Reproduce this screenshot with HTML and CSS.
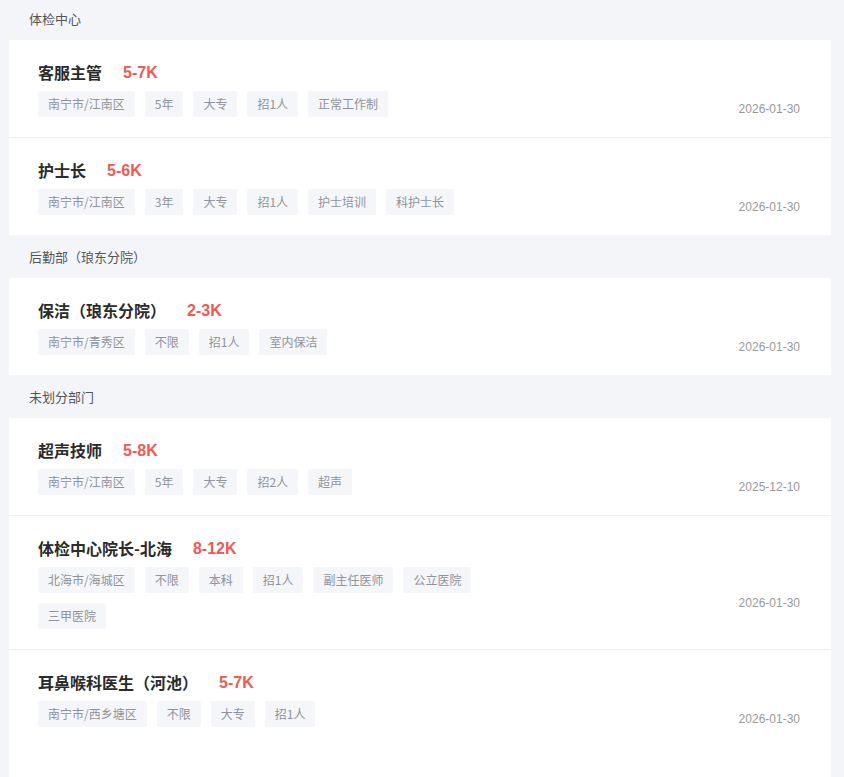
FILE: index.html
```html
<!DOCTYPE html>
<html lang="zh-CN">
<head>
<meta charset="utf-8">
<title>职位列表</title>
<link rel="stylesheet" href="styles.css">
</head>
<body>
<div class="page">
  <div class="section-title first">体检中心</div>
  <div class="card">
    <div class="job">
      <div class="job-main">
        <div class="job-head"><span class="job-name">客服主管</span><span class="salary">5-7K</span></div>
        <div class="tags"><span class="tag">南宁市/江南区</span><span class="tag">5年</span><span class="tag">大专</span><span class="tag">招1人</span><span class="tag">正常工作制</span></div>
      </div>
      <div class="job-side"><span class="date">2026-01-30</span></div>
    </div>
    <div class="job">
      <div class="job-main">
        <div class="job-head"><span class="job-name">护士长</span><span class="salary">5-6K</span></div>
        <div class="tags"><span class="tag">南宁市/江南区</span><span class="tag">3年</span><span class="tag">大专</span><span class="tag">招1人</span><span class="tag">护士培训</span><span class="tag">科护士长</span></div>
      </div>
      <div class="job-side"><span class="date">2026-01-30</span></div>
    </div>
  </div>

  <div class="section-title">后勤部（琅东分院）</div>
  <div class="card">
    <div class="job">
      <div class="job-main">
        <div class="job-head"><span class="job-name">保洁（琅东分院）</span><span class="salary">2-3K</span></div>
        <div class="tags"><span class="tag">南宁市/青秀区</span><span class="tag">不限</span><span class="tag">招1人</span><span class="tag">室内保洁</span></div>
      </div>
      <div class="job-side"><span class="date">2026-01-30</span></div>
    </div>
  </div>

  <div class="section-title">未划分部门</div>
  <div class="card last">
    <div class="job">
      <div class="job-main">
        <div class="job-head"><span class="job-name">超声技师</span><span class="salary">5-8K</span></div>
        <div class="tags"><span class="tag">南宁市/江南区</span><span class="tag">5年</span><span class="tag">大专</span><span class="tag">招2人</span><span class="tag">超声</span></div>
      </div>
      <div class="job-side"><span class="date">2025-12-10</span></div>
    </div>
    <div class="job">
      <div class="job-main">
        <div class="job-head"><span class="job-name">体检中心院长-北海</span><span class="salary">8-12K</span></div>
        <div class="tags"><span class="tag">北海市/海城区</span><span class="tag">不限</span><span class="tag">本科</span><span class="tag">招1人</span><span class="tag">副主任医师</span><span class="tag">公立医院</span><span class="tag">三甲医院</span></div>
      </div>
      <div class="job-side"><span class="date">2026-01-30</span></div>
    </div>
    <div class="job">
      <div class="job-main">
        <div class="job-head"><span class="job-name">耳鼻喉科医生（河池）</span><span class="salary">5-7K</span></div>
        <div class="tags"><span class="tag">南宁市/西乡塘区</span><span class="tag">不限</span><span class="tag">大专</span><span class="tag">招1人</span></div>
      </div>
      <div class="job-side"><span class="date">2026-01-30</span></div>
    </div>
  </div>
</div>
</body>
</html>
```
FILE: styles.css
```css
* { box-sizing: border-box; }
html, body {
  margin: 0;
  padding: 0;
  background: #f4f5f9;
  font-family: "Noto Sans CJK SC", "Liberation Sans", sans-serif;
}
.page {
  padding: 0 13px 0 9px;
  overflow: hidden;
  height: 777px;
}
.section-title {
  height: 43px;
  line-height: 43px;
  padding-left: 20px;
  font-size: 13px;
  color: #555;
}
.section-title.first {
  height: 40px;
  line-height: 37px;
}
.card {
  background: #fff;
}
.card.last {
  padding-bottom: 80px;
}
.job {
  display: flex;
  align-items: center;
  padding: 20px 31px 20px 29px;
  border-bottom: 1px solid #f0f1f4;
}
.job:last-child { border-bottom: none; }
.job-main {
  flex: 1;
  min-width: 0;
}
.job-head {
  display: flex;
  align-items: center;
  height: 24px;
  margin-bottom: 7px;
}
.job-name {
  font-size: 16px;
  font-weight: 700;
  color: #2b2b2b;
}
.salary {
  margin-left: 21px;
  padding-top: 1px;
  font-family: "Liberation Sans", Arial, sans-serif;
  font-size: 16px;
  font-weight: 700;
  color: #ee5a55;
}
.tags {
  display: flex;
  flex-wrap: wrap;
  gap: 10px 10px;
  max-width: 470px;
}
.tag {
  height: 26px;
  line-height: 26px;
  padding: 0 10px;
  background: #f5f6f9;
  border-radius: 2px;
  font-size: 12px;
  color: #8e939d;
}
.job-side {
  padding-top: 40px;
}
.date {
  display: block;
  line-height: 16px;
  font-family: "Liberation Sans", Arial, sans-serif;
  font-size: 12px;
  color: #999;
}
```
